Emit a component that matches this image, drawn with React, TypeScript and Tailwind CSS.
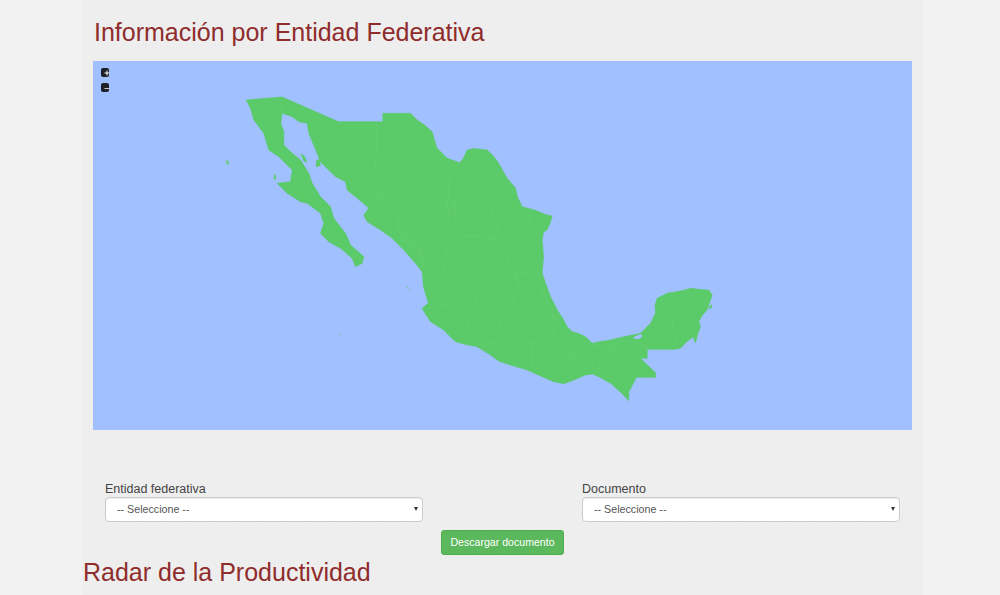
const mexicoOutline =
  'M245.7 100 L281.7 97 L338 121.7 L382.3 121.7 L382.3 113.3 L410 113.3 L416.7 120 L424 125 L431.7 131.7 L434 140 L436.7 148.3 L446.7 158.3 L459.3 162.7 L463 158 L466.7 150 L473 148.5 L486.7 150 L492 155 L498.3 163.3 L503 172 L506.7 178.3 L515 188.3 L517 197 L521.7 206.7 L534 210 L546.7 215 L551.7 216 L550 222 L546.5 230 L543 232 L541.7 240 L543 256.7 L541.7 273 L545 283 L550 296.7 L556.7 310 L562 318 L566.7 326.7 L571.7 331.7 L578 333.5 L585 336.7 L591.7 343.3 L600 341.5 L610 340 L623.3 336.7 L632 335 L640 333.3 L650 323.3 L655 313.3 L654.5 305 L656.7 298.3 L666.7 293.3 L680 291 L690 288.3 L700 289.5 L708.3 290 L711.7 295 L708.5 304 L706.7 310 L702 315 L698.3 321.7 L700 326.7 L697 335 L695 342.7 L692.7 336.7 L686 342 L680 348.3 L675 349.3 L646.7 349.3 L646.7 358.3 L640 358.3 L648 366 L655 372.7 L655 377.3 L636 377.3 L632 385 L628.3 391.7 L628.3 400.7 L620 392 L610 383.3 L598.3 376.7 L592 374 L585 375 L573.3 380 L563.3 383.7 L553.3 381.7 L540 376 L526.7 370 L510 365 L498 361 L490 355 L476.7 346.7 L465 344.5 L455 341.7 L448 335 L443.3 330 L430 321.7 L425 314 L421.7 308.3 L428 303 L425 294 L423 287 L421.7 271.7 L413 261 L403.3 250 L391.7 238.3 L380 230 L366.7 221.7 L363.3 215 L368.3 208 L356.7 198.3 L346.7 190 L345 181.7 L335 176.7 L327 169 L320 161.7 L314 147 L308.3 133.3 L306.7 123.3 L298.3 121.7 L291.7 116.7 L281.7 113.3 L280.3 123.3 L283.3 131.7 L283.3 145 L291.7 153.3 L300 160 L308.3 173.3 L311.7 183.3 L320 196.7 L330 206.7 L333.3 218.3 L345 233.3 L350 245 L363.3 256.7 L361.7 263.3 L355 266.7 L351.7 258.3 L340 248.3 L328.3 241.7 L320 233.3 L323.3 223.3 L320 213.3 L306.7 203.3 L300 201.7 L286.7 193.3 L276.7 183.3 L290 181.7 L291.7 170 L278.3 156.7 L268.3 150 L263.3 133.3 L253.3 120 L250 108.3 Z';

const islands = [
  'M300 153 L304 156 L307 163 L303 161 Z',
  'M316 160 L320 159 L320 166 L315 167 Z',
  'M226 160 L228 161 L228 165 L226 164 Z',
  'M274 174 L275.5 176 L275 180 L273 179 Z',
  'M406 286 L408 287 L407 288 Z',
  'M409 289 L410.5 290 L409.5 291 Z',
  'M339 334 L341 334 L340 335 Z',
  'M709 306 L712 304 L711 308 L708 309 Z',
];

const lagoon = 'M633 337 L640 334 L642 336 L639 339 L634 339 Z';

const stateBorders = [
  'M280 103 L282 113',
  'M292.3 181.7 L311.7 181.7',
  'M376.7 123 L375 170 L371.7 176.7 L376.7 190 L378 200',
  'M378 200 L383 196.7 L386.7 206.7 L400 218 L396.7 226.7 L403 240 L416.7 246.7 L423 266.7',
  'M400 218 L411.7 203 L430 206.7 L446.7 200 L448 218 L455 200',
  'M459.3 162.7 L448 180 L448 200',
  'M500 187 L490 207 L497 227 L495 238 L473 260 L480 272',
  'M500 187 L515 190',
  'M530 213 L528 227 L510 247 L507 263 L515 273 L540 275',
  'M448 200 L455 207 L455 227 L465 235 L495 238',
  'M465 235 L447 247 L442 280 L450 293',
  'M400 235 L417 243 L425 265 L442 273',
  'M465 287 L478 277 L480 283 L468 288 Z',
  'M480 272 L490 277 L488 283 L477 297 L475 307 L462 313',
  'M442 293 L450 304 L428 308',
  'M462 313 L470 325 L455 335',
  'M475 307 L492 300 L505 312 L498 324 L503 340 L476 346',
  'M503 340 L515 335 L530 343 L533 368',
  'M515 273 L520 290 L512 300 L522 315 L510 320 L515 335',
  'M530 343 L540 340 L551 338 L565 345 L570 356 L590 360 L597 373',
  'M551 338 L555 322 L548 305 L540 285',
  'M522 315 L532 322 L545 325 L540 331 L528 328',
  'M570 356 L590 345 L600 345 L610 348 L630 348',
  'M597 373 L600 360 L612 350 L628 358 L640 358',
  'M610 348 L625 340 L645 345 L646 349',
  'M650 323 L662 310 L672 320 L676 349',
  'M672 320 L690 312 L708 296',
];

function MexicoMap() {
  return (
    <svg viewBox="93 61 818 369" className="block h-full w-full">
      <path d={mexicoOutline} fill="#5bca69" stroke="#5bca69" strokeWidth="0.6" strokeLinejoin="round" />
      {islands.map((d) => (
        <path key={d} d={d} fill="#5bca69" />
      ))}
      <path d={lagoon} fill="#a0c0ff" />
      {stateBorders.map((d) => (
        <path key={d} d={d} fill="none" stroke="#68ce75" strokeWidth="0.6" strokeLinejoin="round" />
      ))}
    </svg>
  );
}

function ZoomIn() {
  return (
    <svg width="8" height="9" viewBox="0 0 8 9" className="block overflow-visible">
      <rect width="8" height="9" rx="2" fill="#1e2226" />
      <path d="M3.5 5h5M6 2.5v5" stroke="#fff" strokeWidth="1" />
    </svg>
  );
}

function ZoomOut() {
  return (
    <svg width="8" height="9" viewBox="0 0 8 9" className="block overflow-visible">
      <rect width="8" height="9" rx="2" fill="#1e2226" />
      <path d="M3.5 5.5h5" stroke="#c8c8c8" strokeWidth="1" />
    </svg>
  );
}

function SelectField({ label }: { label: string }) {
  return (
    <label className="block w-[318px]">
      <span className="block h-[15px] text-[12.5px] leading-[14px] text-[#444]">{label}</span>
      <span className="relative block">
        <select className="block h-[25px] w-full appearance-none rounded-[4px] border border-[#ccc] bg-white px-[11px] text-[10.7px] text-[#555] shadow-[inset_0_1px_1px_rgba(0,0,0,0.075)]">
          <option>-- Seleccione --</option>
        </select>
        <span className="absolute top-[10px] right-[5px] size-0 border-x-[2.5px] border-t-[4px] border-x-transparent border-t-[#333]" />
      </span>
    </label>
  );
}

export default function App() {
  return (
    <div className="h-[595px] overflow-hidden bg-[#f2f2f2] font-['Liberation_Sans',Arial,sans-serif]">
      <div className="ml-[82px] h-full w-[841px] bg-[#eeeeee] bg-[conic-gradient(#ededed_25%,#efefef_0_50%,#ededed_0_75%,#efefef_0)] bg-size-[3px_3px]">
        <div className="px-[11px] pt-[18px]">
          <h2 className="pl-[1px] text-[25px] leading-[28px] font-normal text-[#8f2c2c]">
            Información por Entidad Federativa
          </h2>
          <div className="relative mt-[15px] h-[369px] w-[819px] bg-[#a0c0ff]">
            <MexicoMap />
            <div className="absolute top-[7px] left-[8px] flex flex-col gap-[6px]">
              <ZoomIn />
              <ZoomOut />
            </div>
          </div>
        </div>
        <div className="mt-[52px] flex gap-[159px] pl-[23px]">
          <SelectField label="Entidad federativa" />
          <SelectField label="Documento" />
        </div>
        <div className="mt-[8px] flex justify-center">
          <button className="h-[25px] w-[123px] rounded-[3px] border border-[#4cae4c] bg-[#5cb85c] text-[10.6px] text-white">
            Descargar documento
          </button>
        </div>
        <h2 className="mt-[3px] pl-[1px] text-[25px] leading-[28px] font-normal text-[#8f2c2c]">
          Radar de la Productividad
        </h2>
      </div>
    </div>
  );
}
